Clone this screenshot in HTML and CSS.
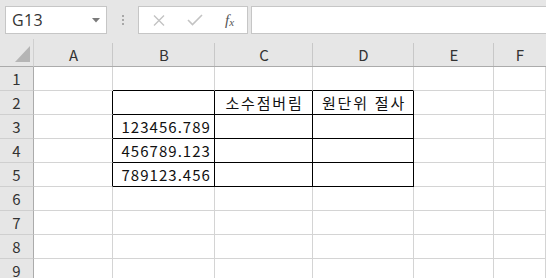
FILE: index.html
```html
<!DOCTYPE html>
<html lang="ko">
<head>
<meta charset="utf-8">
<link rel="stylesheet" href="styles.css">
</head>
<body>
<div class="toolbar">
  <div class="namebox">
    <span class="ref">G13</span>
    <svg class="caret" width="8" height="5" viewBox="0 0 8 5"><path d="M0 0H8L4 4.5Z" fill="#7a7a7a"/></svg>
  </div>
  <div class="grip"><i></i><i></i><i></i></div>
  <div class="fbtns">
    <svg class="ic" width="12" height="11" viewBox="0 0 12 11"><path d="M1 0.5L11 10.5M11 0.5L1 10.5" stroke="#c3c3c3" stroke-width="1.4" fill="none"/></svg>
    <svg class="ic ok" width="16" height="12" viewBox="0 0 16 12"><path d="M1 6L5.5 10.5L15 1" stroke="#c3c3c3" stroke-width="1.6" fill="none"/></svg>
    <span class="fx">f<sub>x</sub></span>
  </div>
  <div class="finput"></div>
</div>
<div class="sheet">
  <div class="corner"><svg width="15" height="16" viewBox="0 0 15 16"><path d="M15 0V16H0Z" fill="#b5b5b5"/></svg></div>
  <div class="ch">A</div><div class="ch">B</div><div class="ch">C</div><div class="ch">D</div><div class="ch">E</div><div class="ch last">F</div>

  <div class="rh">1</div><div class="c"></div><div class="c bb"></div><div class="c bb"></div><div class="c bb"></div><div class="c"></div><div class="c"></div>
  <div class="rh">2</div><div class="c br"></div><div class="c t"></div><div class="c t ctr">소수점버림</div><div class="c t ctr">원단위 절사</div><div class="c"></div><div class="c"></div>
  <div class="rh">3</div><div class="c br"></div><div class="c t num">123456.789</div><div class="c t"></div><div class="c t"></div><div class="c"></div><div class="c"></div>
  <div class="rh">4</div><div class="c br"></div><div class="c t num">456789.123</div><div class="c t"></div><div class="c t"></div><div class="c"></div><div class="c"></div>
  <div class="rh">5</div><div class="c br"></div><div class="c t num">789123.456</div><div class="c t"></div><div class="c t"></div><div class="c"></div><div class="c"></div>
  <div class="rh">6</div><div class="c"></div><div class="c"></div><div class="c"></div><div class="c"></div><div class="c"></div><div class="c"></div>
  <div class="rh">7</div><div class="c"></div><div class="c"></div><div class="c"></div><div class="c"></div><div class="c"></div><div class="c"></div>
  <div class="rh">8</div><div class="c"></div><div class="c"></div><div class="c"></div><div class="c"></div><div class="c"></div><div class="c"></div>
  <div class="rh">9</div><div class="c"></div><div class="c"></div><div class="c"></div><div class="c"></div><div class="c"></div><div class="c"></div>
</div>
</body>
</html>
```
FILE: styles.css
```css
* { box-sizing: border-box; }
html, body { margin: 0; padding: 0; }
body {
  width: 546px;
  height: 278px;
  overflow: hidden;
  background: #e6e6e6;
  font-family: "Noto Sans CJK KR", "Noto Sans", sans-serif;
  color: #222;
}
.toolbar {
  display: flex;
  align-items: flex-start;
  height: 39px;
  padding-top: 6px;
  padding-left: 5px;
}
.namebox {
  width: 102px;
  height: 28px;
  background: #fff;
  border: 1px solid #c6c6c6;
  display: flex;
  align-items: center;
  justify-content: space-between;
  padding: 0 6px 0 6px;
}
.ref {
  font-family: "Open Sans", "Noto Sans", sans-serif;
  font-size: 16px;
  color: #333;
  letter-spacing: 0.3px;
}
.caret { margin-top: 1px; }
.grip {
  width: 31px;
  height: 28px;
  display: flex;
  flex-direction: column;
  align-items: center;
  justify-content: center;
  gap: 2px;
}
.grip i {
  display: block;
  width: 2px;
  height: 2px;
  background: #a8a8a8;
}
.fbtns {
  width: 110px;
  height: 28px;
  background: #fff;
  border: 1px solid #c6c6c6;
  display: flex;
  align-items: center;
  padding-left: 14px;
}
.ic.ok { margin-left: 22px; }
.fx {
  margin-left: 22px;
  font-family: "Liberation Serif", serif;
  font-style: italic;
  font-size: 15px;
  color: #555;
  line-height: 1;
}
.fx sub { font-size: 11px; vertical-align: -1px; }
.finput {
  flex: 1;
  height: 28px;
  margin-left: 3px;
  background: #fff;
  border: 1px solid #c6c6c6;
  border-right: none;
}
.sheet {
  display: grid;
  grid-template-columns: 34px 79px 102px 98px 101px 80px 1fr;
  grid-template-rows: 28px repeat(9, 24px);
  background: #fff;
}
.corner {
  background: #e6e6e6;
  border-right: 1px solid #d0d0d0;
  border-bottom: 1px solid #ababab;
  display: flex;
  align-items: flex-end;
  justify-content: flex-end;
  padding: 0 3px 4px 0;
}
.ch {
  background: #e6e6e6;
  border-bottom: 1px solid #ababab;
  position: relative;
  display: flex;
  align-items: center;
  justify-content: center;
  padding-top: 4px;
  font-size: 15px;
  color: #333;
}
.ch::after {
  content: "";
  position: absolute;
  right: 0;
  top: 4px;
  bottom: 0;
  border-right: 1px solid #c8c8c8;
}
.ch.last::after { display: none; }
.rh {
  background: #e6e6e6;
  border-right: 1px solid #ababab;
  border-bottom: 1px solid #cfcfcf;
  display: flex;
  align-items: center;
  justify-content: center;
  font-size: 15px;
  color: #333;
}
.c {
  border-right: 1px solid #d4d4d4;
  border-bottom: 1px solid #d4d4d4;
  font-size: 15px;
  color: #111;
  display: flex;
  align-items: center;
  white-space: nowrap;
  overflow: hidden;
}
.c.bb { border-bottom-color: #000; }
.c.br { border-right-color: #000; }
.c.t { border-right-color: #000; border-bottom-color: #000; }
.c.num { justify-content: flex-end; padding-right: 3px; letter-spacing: 1.05px; }
.c.ctr { justify-content: center; letter-spacing: 1.8px; padding-left: 2px; }
```
